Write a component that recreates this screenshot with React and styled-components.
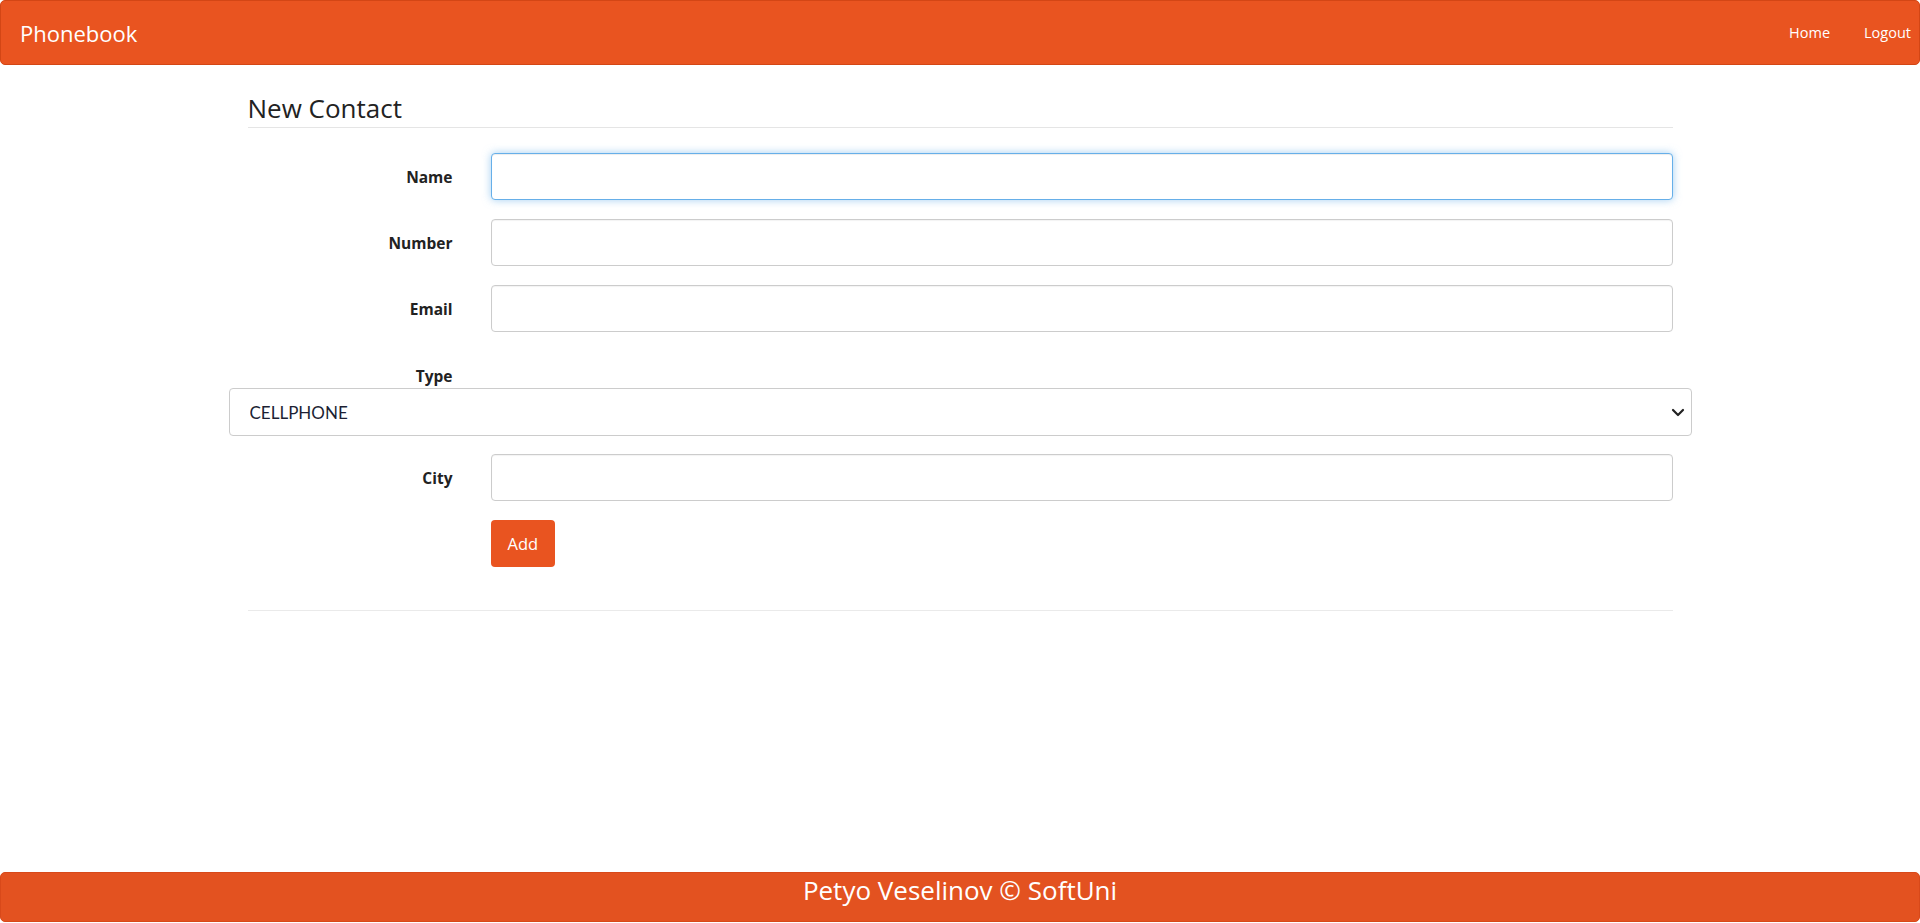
import React from "react";
import styled, { createGlobalStyle } from "styled-components";

const GlobalStyle = createGlobalStyle`
  * { box-sizing: border-box; }
  html, body { margin: 0; padding: 0; }
  body {
    font-family: "Open Sans", "Noto Sans", sans-serif;
    color: #333;
    background: #fff;
  }
`;

const Page = styled.div`
  min-height: 100vh;
  display: flex;
  flex-direction: column;
`;

const NavBar = styled.nav`
  height: 65px;
  background: #e95420;
  border: 1px solid #d34615;
  border-radius: 5px;
  display: flex;
  align-items: center;
  justify-content: space-between;
  padding: 0 8px 0 19px;
`;

const Brand = styled.a`
  color: #fff;
  font-size: 22px;
  text-decoration: none;
`;

const NavLinks = styled.div`
  display: flex;
  align-items: center;
  gap: 34px;
`;

const NavLink = styled.a`
  color: #fff;
  font-size: 14.5px;
  text-decoration: none;
`;

const Main = styled.main`
  flex: 1;
`;

const Container = styled.div`
  width: 1425px;
  margin: 0 auto;
  padding-top: 28px;
`;

const Legend = styled.h3`
  margin: 0 0 25px;
  font-size: 26px;
  font-weight: 400;
  line-height: 31px;
  color: #222;
  padding-bottom: 3px;
  border-bottom: 1px solid #e5e5e5;
`;

const Row = styled.div`
  display: grid;
  grid-template-columns: 205px 1fr;
  column-gap: 38px;
  align-items: center;
  margin-bottom: 19px;
`;

const Label = styled.label`
  text-align: right;
  font-weight: 700;
  font-size: 15.5px;
  color: #222;
`;

const Input = styled.input`
  height: 47px;
  width: 100%;
  border: 1px solid ${(p) => (p.$focused ? "#66afe9" : "#cccccc")};
  border-radius: 4px;
  font-family: inherit;
  font-size: 16px;
  padding: 0 12px;
  outline: none;
  box-shadow: ${(p) =>
    p.$focused
      ? "inset 0 1px 1px rgba(0,0,0,.075), 0 0 8px rgba(102,175,233,.6)"
      : "inset 0 1px 1px rgba(0,0,0,.05)"};
`;

const TypeBlock = styled.div`
  margin-bottom: 18px;
`;

const TypeLabelRow = styled.div`
  display: grid;
  grid-template-columns: 205px 1fr;
  padding-top: 13px;
  line-height: 24px;
`;

const SelectWrap = styled.div`
  position: relative;
  margin: 0 -19px;
`;

const Select = styled.select`
  appearance: none;
  width: 100%;
  height: 48px;
  border: 1px solid #cccccc;
  border-radius: 4px;
  background: #fff;
  font-family: Lato, "Open Sans", sans-serif;
  font-size: 17px;
  color: #1c1f33;
  padding: 0 40px 0 20px;
  outline: none;
`;

const Chevron = styled.svg`
  position: absolute;
  right: 6px;
  top: 50%;
  transform: translateY(-50%);
  pointer-events: none;
`;

const ButtonRow = styled.div`
  display: grid;
  grid-template-columns: 205px auto;
  column-gap: 38px;
  justify-content: start;
  margin-top: 2px;
  padding-bottom: 43px;
  border-bottom: 1px solid #eaeaea;
`;

const Button = styled.button`
  height: 47px;
  padding: 0 17px;
  background: #e95420;
  border: none;
  border-radius: 4px;
  color: #fff;
  font-family: inherit;
  font-size: 16.5px;
  cursor: pointer;
`;

const Footer = styled.footer`
  height: 50px;
  margin-bottom: 1px;
  background: #e35220;
  border: 1px solid #d8491a;
  border-radius: 5px;
  color: #fff;
  font-size: 26px;
  text-align: center;
  padding-top: 1px;
  line-height: 32px;
`;

export default function App() {
  return (
    <>
      <GlobalStyle />
      <Page>
        <NavBar>
          <Brand href="#">Phonebook</Brand>
          <NavLinks>
            <NavLink href="#">Home</NavLink>
            <NavLink href="#">Logout</NavLink>
          </NavLinks>
        </NavBar>
        <Main>
          <Container>
            <form onSubmit={(e) => e.preventDefault()}>
              <Legend>New Contact</Legend>
              <Row>
                <Label>Name</Label>
                <Input $focused />
              </Row>
              <Row>
                <Label>Number</Label>
                <Input />
              </Row>
              <Row>
                <Label>Email</Label>
                <Input />
              </Row>
              <TypeBlock>
                <TypeLabelRow>
                  <Label>Type</Label>
                </TypeLabelRow>
                <SelectWrap>
                  <Select defaultValue="CELLPHONE">
                    <option>CELLPHONE</option>
                    <option>HOME</option>
                    <option>WORK</option>
                  </Select>
                  <Chevron width="16" height="16" viewBox="0 0 16 16">
                    <path
                      d="M3 6l5 5 5-5"
                      fill="none"
                      stroke="#222"
                      strokeWidth="2.2"
                      strokeLinecap="round"
                      strokeLinejoin="round"
                    />
                  </Chevron>
                </SelectWrap>
              </TypeBlock>
              <Row>
                <Label>City</Label>
                <Input />
              </Row>
              <ButtonRow>
                <span />
                <Button type="submit">Add</Button>
              </ButtonRow>
            </form>
          </Container>
        </Main>
        <Footer>Petyo Veselinov © SoftUni</Footer>
      </Page>
    </>
  );
}
